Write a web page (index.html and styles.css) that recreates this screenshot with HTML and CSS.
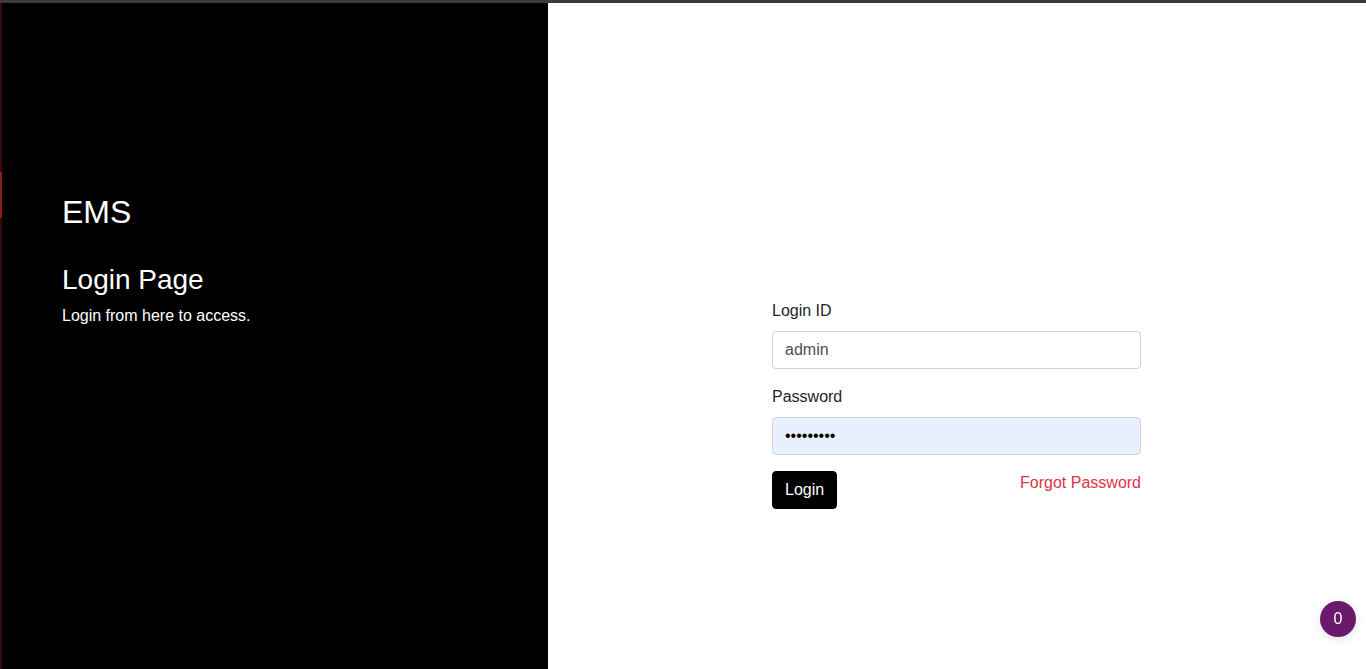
FILE: index.html
```html
<!DOCTYPE html>
<html lang="en">
<head>
<meta charset="utf-8">
<title>EMS - Login</title>
<link rel="stylesheet" href="styles.css">
</head>
<body>
<div class="topbar"></div>
<div class="page">
  <aside class="brand-panel">
    <h1 class="brand-title">EMS</h1>
    <h2 class="brand-sub">Login Page</h2>
    <p class="brand-text">Login from here to access.</p>
  </aside>
  <main class="form-panel">
    <form class="login-form">
      <div class="form-group">
        <label class="form-label" for="loginId">Login ID</label>
        <input class="form-input" id="loginId" type="text" value="admin">
      </div>
      <div class="form-group">
        <label class="form-label" for="pwd">Password</label>
        <input class="form-input form-input-filled" id="pwd" type="password" value="adminpass">
      </div>
      <div class="form-actions">
        <button class="btn-login" type="button">Login</button>
        <a class="forgot-link" href="#">Forgot Password</a>
      </div>
    </form>
  </main>
</div>
<div class="chat-badge">0</div>
</body>
</html>
```
FILE: styles.css
```css
* { box-sizing: border-box; }
html, body { margin: 0; padding: 0; }
body {
  font-family: "Liberation Sans", Arial, sans-serif;
  font-size: 16px;
  line-height: 1.5;
  color: #212529;
  background: #fff;
  height: 669px;
  overflow: hidden;
}
.topbar { height: 3px; background: #3b3b3d; }
.page { display: flex; height: 666px; }
.brand-panel {
  width: 548px;
  flex: none;
  background: #000;
  color: #fff;
  padding: 190px 0 0 60px;
  border-left: 2px solid #3a0a0a;
  border-image: linear-gradient(to bottom, #3a0a0a 0, #3a0a0a 169px, #8c1c1c 169px, #8c1c1c 215px, #3a0a0a 215px) 1;
}
.brand-title {
  margin: 0;
  font-size: 32px;
  font-weight: 400;
  line-height: 1.2;
}
.brand-sub {
  margin: 32px 0 0;
  font-size: 28px;
  font-weight: 400;
  line-height: 1.2;
}
.brand-text { margin: 7px 0 0; font-size: 16px; line-height: 1.5; }
.form-panel {
  flex: 1;
  display: flex;
  justify-content: flex-start;
  padding: 296px 0 0 224px;
}
.login-form { width: 369px; }
.form-group { margin-bottom: 16px; }
.form-label { display: block; margin-bottom: 8px; }
.form-input {
  display: block;
  width: 100%;
  height: 38px;
  padding: 6px 12px;
  font-family: inherit;
  font-size: 16px;
  line-height: 1.5;
  color: #495057;
  background: #fff;
  border: 1px solid #ced4da;
  border-radius: 4px;
  outline: none;
}
.form-input-filled { background: #e8f0fe; color: #000; }
.form-actions {
  display: flex;
  justify-content: space-between;
  align-items: flex-start;
}
.btn-login {
  font-family: inherit;
  font-size: 16px;
  line-height: 1.5;
  padding: 6px 12px;
  color: #fff;
  background: #000;
  border: 1px solid #000;
  border-radius: 4px;
}
.forgot-link { color: #dc3545; text-decoration: none; line-height: 24px; }
.chat-badge {
  position: fixed;
  right: 10px;
  bottom: 32px;
  width: 36px;
  height: 36px;
  border-radius: 50%;
  background: #6a1a6b;
  color: #fff;
  display: flex;
  align-items: center;
  justify-content: center;
  font-size: 16px;
  box-shadow: 0 2px 8px rgba(0,0,0,0.12);
}
```
